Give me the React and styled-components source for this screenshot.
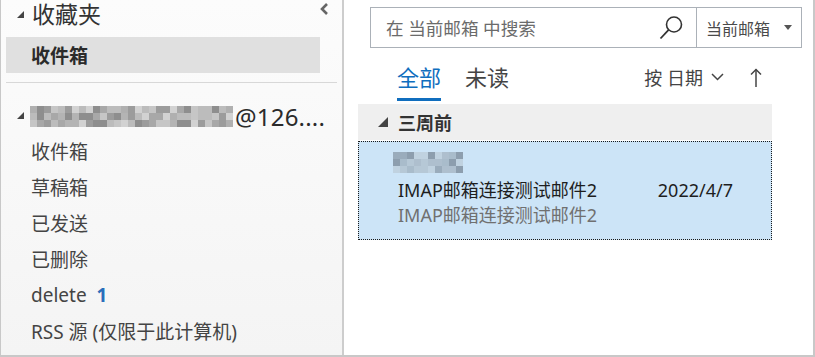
import React from "react";
import styled, { createGlobalStyle } from "styled-components";

const GlobalStyle = createGlobalStyle`
  html, body {
    margin: 0;
    padding: 0;
    background: #ffffff;
  }
  body {
    font-family: "Segoe UI", "Noto Sans", "Noto Sans CJK SC", sans-serif;
    color: #444;
  }
`;

const Frame = styled.div`
  width: 815px;
  height: 357px;
  box-sizing: border-box;
  display: flex;
  border-left: 1px solid #c8c8c8;
  border-right: 2px solid #c8c8c8;
  border-bottom: 2px solid #c8c8c8;
  overflow: hidden;
`;

const Sidebar = styled.div`
  width: 341px;
  flex-shrink: 0;
  border-right: 2px solid #cdcdcd;
  background: linear-gradient(#fcfcfc, #f4f4f4);
  display: flex;
  flex-direction: column;
`;

const FavHeader = styled.div`
  height: 28px;
  display: flex;
  align-items: center;
  position: relative;
`;

const Caret = styled.svg`
  flex-shrink: 0;
  margin-left: ${(p) => p.$left}px;
  margin-right: ${(p) => p.$right}px;
  align-self: ${(p) => p.$align || "center"};
  margin-top: ${(p) => p.$top || 0}px;
`;

const BigTitle = styled.span`
  font-size: 23px;
  line-height: 24px;
  color: #333;
`;

const Collapse = styled.svg`
  position: absolute;
  left: 318px;
  top: 2px;
`;

const SelectedFolder = styled.div`
  margin: 9px 0 0 5px;
  width: 314px;
  height: 36px;
  box-sizing: border-box;
  padding-left: 25px;
  background: #e0e0e0;
  display: flex;
  align-items: center;
  font-size: 19px;
  font-weight: 700;
  color: #2b2b2b;
`;

const Separator = styled.div`
  margin: 9px 0 0 5px;
  width: 331px;
  height: 1px;
  background: #d8d8d8;
`;

const AccountRow = styled.div`
  margin-top: 17px;
  height: 33px;
  display: flex;
  align-items: center;
  white-space: nowrap;
`;

const AccountTail = styled.span`
  font-size: 24px;
  color: #2b2b2b;
  letter-spacing: 0.2px;
`;

const Folder = styled.div`
  height: 36px;
  display: flex;
  align-items: center;
  padding-left: 30px;
  font-size: 19px;
  color: #444;
  white-space: nowrap;
`;

const Count = styled.span`
  color: #2a6ebb;
  font-weight: 700;
  margin-left: 10px;
`;

const ListPane = styled.div`
  flex: 1;
  background: #ffffff;
  display: flex;
  flex-direction: column;
`;

const SearchBar = styled.div`
  margin: 7px 0 0 26px;
  width: 432px;
  height: 41px;
  box-sizing: border-box;
  border: 1px solid #abb1b8;
  display: flex;
`;

const SearchInput = styled.div`
  width: 326px;
  box-sizing: border-box;
  padding: 0 13px 0 15px;
  display: flex;
  align-items: center;
  justify-content: space-between;
  border-right: 1px solid #abb1b8;
  font-size: 17.6px;
  color: #6b6b6b;
`;

const Scope = styled.div`
  flex: 1;
  display: flex;
  align-items: center;
  justify-content: space-between;
  padding: 0 9px 0 9px;
  font-size: 16px;
  color: #4a4a4a;
`;

const TabsRow = styled.div`
  display: flex;
  align-items: flex-start;
  padding-left: 53px;
  padding-right: 51px;
`;

const Tab = styled.div`
  padding-top: 14px;
  padding-bottom: 6px;
  line-height: 30px;
  font-size: 22px;
  margin-right: 24px;
  color: ${(p) => (p.$active ? "#106ebe" : "#444")};
  border-bottom: 3px solid ${(p) => (p.$active ? "#106ebe" : "transparent")};
`;

const Sort = styled.div`
  margin-left: auto;
  height: 53px;
  box-sizing: border-box;
  padding-top: 5px;
  display: flex;
  align-items: center;
  font-size: 18px;
  color: #444;
  gap: 8px;
`;

const SortArrow = styled.svg`
  margin-left: 18px;
`;

const GroupHeader = styled.div`
  margin: 3px 0 0 14px;
  width: 414px;
  height: 36px;
  background: #efefef;
  display: flex;
  align-items: center;
  padding-left: 20px;
  box-sizing: border-box;
  font-size: 18px;
  font-weight: 700;
  color: #333;
`;

const MailItem = styled.div`
  margin: 1px 0 0 14px;
  width: 414px;
  height: 99px;
  box-sizing: border-box;
  border: 1px dotted #1a1a1a;
  background: #cce4f7;
  padding: 10px 38px 0 39px;
  display: flex;
  flex-direction: column;
`;

const SenderBlur = styled.svg`
  margin-left: -5px;
  display: block;
`;

const SubjectRow = styled.div`
  display: flex;
  justify-content: space-between;
  margin-top: 4px;
  line-height: 26px;
  font-size: 18px;
  color: #1e1e1e;
`;

const Preview = styled.div`
  line-height: 25px;
  font-size: 18px;
  color: #707070;
`;

const AccountBlur = styled.svg`
  margin-right: 2px;
  display: block;
`;

const hash = (n) => {
  const x = Math.sin(n * 12.9898 + 78.233) * 43758.5453;
  return x - Math.floor(x);
};

function Mosaic({ cols, rows, cell, palette, seed, as: Comp = "svg" }) {
  const cells = [];
  for (let r = 0; r < rows; r++) {
    for (let c = 0; c < cols; c++) {
      const v = hash(seed + r * 97 + c * 13);
      const color = palette[Math.floor(v * palette.length)];
      cells.push(
        <rect key={`${r}-${c}`} x={c * cell} y={r * cell} width={cell} height={cell} fill={color} />
      );
    }
  }
  return (
    <Comp width={cols * cell} height={rows * cell} shapeRendering="crispEdges">
      {cells}
    </Comp>
  );
}

const grayPalette = ["#a8a8a8", "#b4b4b4", "#bcbcbc", "#c6c6c6", "#9c9c9c", "#d2d2d2", "#b0b0b0", "#8e8e8e"];
const bluePalette = ["#a9bccb", "#b6c8d6", "#8d9eae", "#9aacbc", "#c0d2e0", "#7f909f", "#aebfce"];

const Triangle = ({ size, ...rest }) => (
  <Caret width={size} height={size} viewBox="0 0 10 10" {...rest}>
    <polygon points="10,0 10,10 0,10" fill="#444" />
  </Caret>
);

const folders = ["收件箱", "草稿箱", "已发送", "已删除"];

export default function App() {
  return (
    <>
      <GlobalStyle />
      <Frame>
        <Sidebar>
          <FavHeader>
            <Triangle size={7} $left={16} $right={8} $align="flex-start" $top={11} />
            <BigTitle>收藏夹</BigTitle>
            <Collapse width="12" height="14" viewBox="0 0 12 14">
              <polyline points="8,2 3,7 8,12" fill="none" stroke="#666" strokeWidth="2.6" />
            </Collapse>
          </FavHeader>
          <SelectedFolder>收件箱</SelectedFolder>
          <Separator />
          <AccountRow>
            <Triangle size={7} $left={16} $right={6} $align="flex-start" $top={12} />
            <Mosaic as={AccountBlur} cols={29} rows={3} cell={7} seed={5} palette={grayPalette} />
            <AccountTail>@126....</AccountTail>
          </AccountRow>
          {folders.map((name) => (
            <Folder key={name}>{name}</Folder>
          ))}
          <Folder>
            delete<Count>1</Count>
          </Folder>
          <Folder>RSS 源 (仅限于此计算机)</Folder>
        </Sidebar>
        <ListPane>
          <SearchBar>
            <SearchInput>
              <span>在 当前邮箱 中搜索</span>
              <svg width="24" height="25" viewBox="0 0 24 25">
                <circle cx="15" cy="9.5" r="7.5" fill="none" stroke="#333" strokeWidth="1.6" />
                <line x1="9.6" y1="14.9" x2="1.5" y2="23.5" stroke="#333" strokeWidth="1.8" />
              </svg>
            </SearchInput>
            <Scope>
              <span>当前邮箱</span>
              <svg width="8" height="5" viewBox="0 0 8 5">
                <polygon points="0,0 8,0 4,5" fill="#555" />
              </svg>
            </Scope>
          </SearchBar>
          <TabsRow>
            <Tab $active>全部</Tab>
            <Tab>未读</Tab>
            <Sort>
              <span>按 日期</span>
              <svg width="13" height="8" viewBox="0 0 13 8">
                <polyline points="1,1 6.5,6.5 12,1" fill="none" stroke="#444" strokeWidth="1.5" />
              </svg>
              <SortArrow width="12" height="19" viewBox="0 0 12 19">
                <line x1="6" y1="1.5" x2="6" y2="19" stroke="#444" strokeWidth="1.5" />
                <polyline points="1,6.5 6,1.5 11,6.5" fill="none" stroke="#444" strokeWidth="1.5" />
              </SortArrow>
            </Sort>
          </TabsRow>
          <GroupHeader>
            <Triangle size={10} $left={0} $right={10} />
            三周前
          </GroupHeader>
          <MailItem>
            <Mosaic as={SenderBlur} cols={10} rows={3} cell={7} seed={31} palette={bluePalette} />
            <SubjectRow>
              <span>IMAP邮箱连接测试邮件2</span>
              <span>2022/4/7</span>
            </SubjectRow>
            <Preview>IMAP邮箱连接测试邮件2</Preview>
          </MailItem>
        </ListPane>
      </Frame>
    </>
  );
}
